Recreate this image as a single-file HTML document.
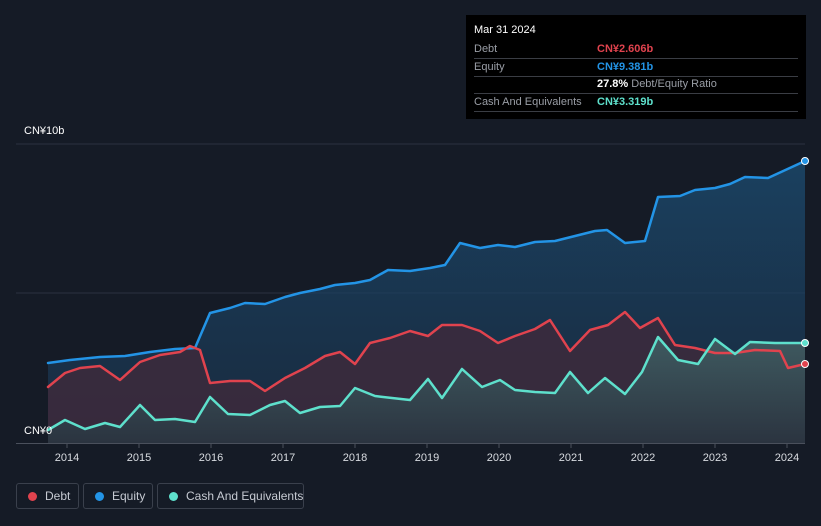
<!DOCTYPE html>
<html><head><meta charset="utf-8"><style>
body{margin:0;width:821px;height:526px;background:#151b26;font-family:"Liberation Sans","Noto Sans CJK SC",sans-serif;overflow:hidden;position:relative}
.t{position:absolute;font-size:11px;color:#fff}
.tip{position:absolute;left:466px;top:15px;width:340px;height:104px;background:#000;}
.row{position:absolute;left:8px;width:324px;height:17px;border-bottom:1px solid #3a3d44;font-size:11px;color:#9a9ea6;line-height:17px;white-space:nowrap}
.row span{position:absolute;left:123px;font-weight:bold}
.leg{position:absolute;top:483px;height:26px;border:1px solid #3a404c;border-radius:3px;color:#c6cad2;font-size:12px;line-height:25px;box-sizing:border-box;white-space:nowrap}
.leg i{position:absolute;top:8px;left:11px;width:9px;height:9px;border-radius:50%}
</style></head><body>
<svg width="821" height="526" style="position:absolute;left:0;top:0">
<defs>
<linearGradient id="eq" x1="0" y1="0" x2="0" y2="1"><stop offset="0" stop-color="#1b4a6e" stop-opacity=".8"/><stop offset="1" stop-color="#1b3550" stop-opacity=".6"/></linearGradient>
<linearGradient id="ca" x1="0" y1="0" x2="0" y2="1"><stop offset="0" stop-color="#3f5a60"/><stop offset="1" stop-color="#2b3440"/></linearGradient>
</defs>
<line x1="16" y1="144" x2="805" y2="144" stroke="#2c3240"/>
<line x1="16" y1="293" x2="805" y2="293" stroke="#2c3240"/>
<polygon fill="url(#eq)" points="48,443 48,363 70,360 100,357 125,356 150,352 175,349 195,348 210,313 230,308 245,303 265,304 285,297 300,293 320,289 335,285 355,283 370,280 388,270 410,271 430,268 445,265 460,243 480,248 498,245 515,247 535,242 555,241 575,236 595,231 607,230 625,243 645,241 658,197 680,196 695,190 715,188 730,184 745,177 768,178 805,161 805,443"/>
<polygon fill="#3d2a3c" fill-opacity=".85" points="48,443 48,387 65,373 80,368 100,366 120,380 140,362 160,355 180,352 190,346 200,350 210,383 230,381 250,381 265,391 285,378 305,368 325,356 340,352 355,364 370,343 390,338 410,331 428,336 442,325 462,325 480,331 498,343 515,336 535,329 550,320 570,351 590,330 608,325 625,312 640,328 658,318 675,345 695,348 715,353 735,353 755,350 780,351 788,368 805,364 805,443"/>
<polygon fill="url(#ca)" points="48,443 48,430 65,420 85,429 105,423 120,427 140,405 155,420 175,419 195,422 210,397 228,414 250,415 270,405 285,401 300,413 320,407 340,406 355,388 375,396 392,398 410,400 428,379 442,398 462,369 482,387 500,380 515,390 535,392 555,393 570,372 588,393 605,378 625,394 642,372 658,337 678,360 698,364 715,339 735,354 750,342 775,343 805,343 805,443"/>
<g fill="none" stroke-width="2.5" stroke-linejoin="round" stroke-linecap="round">
<polyline stroke="#2394e6" points="48,363 70,360 100,357 125,356 150,352 175,349 195,348 210,313 230,308 245,303 265,304 285,297 300,293 320,289 335,285 355,283 370,280 388,270 410,271 430,268 445,265 460,243 480,248 498,245 515,247 535,242 555,241 575,236 595,231 607,230 625,243 645,241 658,197 680,196 695,190 715,188 730,184 745,177 768,178 805,161"/>
<polyline stroke="#e0434e" points="48,387 65,373 80,368 100,366 120,380 140,362 160,355 180,352 190,346 200,350 210,383 230,381 250,381 265,391 285,378 305,368 325,356 340,352 355,364 370,343 390,338 410,331 428,336 442,325 462,325 480,331 498,343 515,336 535,329 550,320 570,351 590,330 608,325 625,312 640,328 658,318 675,345 695,348 715,353 735,353 755,350 780,351 788,368 805,364"/>
<polyline stroke="#5ee0cc" points="48,430 65,420 85,429 105,423 120,427 140,405 155,420 175,419 195,422 210,397 228,414 250,415 270,405 285,401 300,413 320,407 340,406 355,388 375,396 392,398 410,400 428,379 442,398 462,369 482,387 500,380 515,390 535,392 555,393 570,372 588,393 605,378 625,394 642,372 658,337 678,360 698,364 715,339 735,354 750,342 775,343 805,343"/>
</g>
<circle cx="805" cy="161" r="3.5" fill="#2394e6" stroke="#fff"/>
<circle cx="805" cy="364" r="3.5" fill="#e0434e" stroke="#fff"/>
<circle cx="805" cy="343" r="3.5" fill="#5ee0cc" stroke="#fff"/>
<line x1="16" y1="443.5" x2="805" y2="443.5" stroke="#4a505c"/>
<g stroke="#4a505c"><line x1="67" y1="443" x2="67" y2="448"/><line x1="139" y1="443" x2="139" y2="448"/><line x1="211" y1="443" x2="211" y2="448"/><line x1="283" y1="443" x2="283" y2="448"/><line x1="355" y1="443" x2="355" y2="448"/><line x1="427" y1="443" x2="427" y2="448"/><line x1="499" y1="443" x2="499" y2="448"/><line x1="571" y1="443" x2="571" y2="448"/><line x1="643" y1="443" x2="643" y2="448"/><line x1="715" y1="443" x2="715" y2="448"/><line x1="787" y1="443" x2="787" y2="448"/></g>
<g fill="#d8dbe0" font-size="11" text-anchor="middle" font-family="Liberation Sans,sans-serif"><text x="67" y="461">2014</text><text x="139" y="461">2015</text><text x="211" y="461">2016</text><text x="283" y="461">2017</text><text x="355" y="461">2018</text><text x="427" y="461">2019</text><text x="499" y="461">2020</text><text x="571" y="461">2021</text><text x="643" y="461">2022</text><text x="715" y="461">2023</text><text x="787" y="461">2024</text></g>
</svg>
<div class="t" style="left:24px;top:125px">CN¥10b</div>
<div class="t" style="left:24px;top:425px">CN¥0</div>
<div class="tip">
<div style="position:absolute;left:8px;top:9px;color:#fff;font-size:11px">Mar 31 2024</div>
<div class="row" style="top:26px">Debt<span style="color:#e0434e">CN¥2.606b</span></div>
<div class="row" style="top:44px">Equity<span style="color:#2394e6">CN¥9.381b</span></div>
<div class="row" style="top:61px;border:none"><span style="color:#fff">27.8% <b style="color:#9a9ea6;font-weight:normal">Debt/Equity Ratio</b></span></div>
<div class="row" style="top:78px;border-top:1px solid #3a3d44">Cash And Equivalents<span style="color:#5ee0cc">CN¥3.319b</span></div>
</div>
<div class="leg" style="left:16px;width:63px"><i style="background:#e0434e"></i><span style="position:absolute;left:28px">Debt</span></div>
<div class="leg" style="left:83px;width:70px"><i style="background:#2394e6"></i><span style="position:absolute;left:28px">Equity</span></div>
<div class="leg" style="left:157px;width:147px"><i style="background:#5ee0cc"></i><span style="position:absolute;left:28px">Cash And Equivalents</span></div>
</body></html>
